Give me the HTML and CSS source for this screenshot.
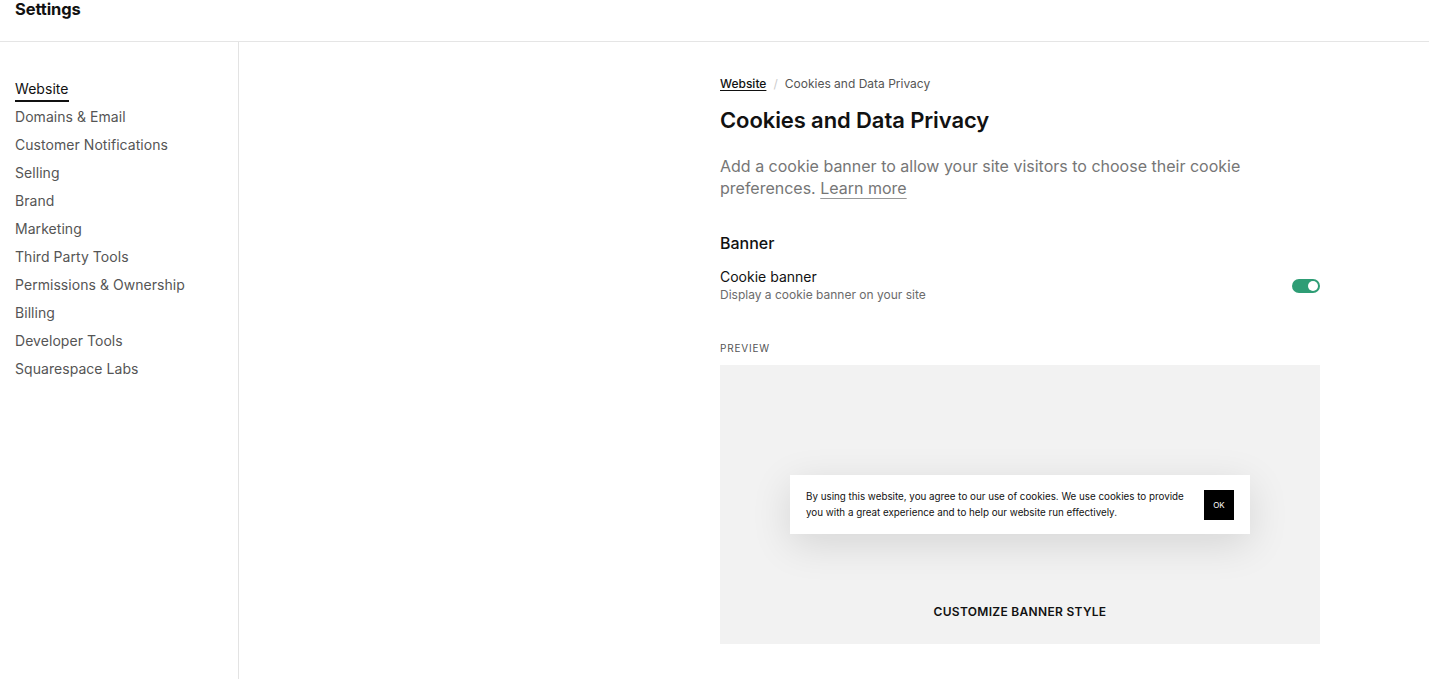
FILE: index.html
```html
<!DOCTYPE html>
<html>
<head>
<meta charset="utf-8">
<link rel="stylesheet" href="styles.css">
</head>
<body>
<header class="topbar"><h1 class="app-title">Settings</h1></header>
<div class="layout">
  <nav class="sidebar">
    <a class="nav-item active">Website</a>
    <a class="nav-item">Domains &amp; Email</a>
    <a class="nav-item">Customer Notifications</a>
    <a class="nav-item">Selling</a>
    <a class="nav-item">Brand</a>
    <a class="nav-item">Marketing</a>
    <a class="nav-item">Third Party Tools</a>
    <a class="nav-item">Permissions &amp; Ownership</a>
    <a class="nav-item">Billing</a>
    <a class="nav-item">Developer Tools</a>
    <a class="nav-item">Squarespace Labs</a>
  </nav>
  <main class="main">
    <section class="panel">
      <div class="breadcrumb"><a class="crumb-link">Website</a><span class="crumb-sep">/</span><span class="crumb-current">Cookies and Data Privacy</span></div>
      <h2 class="page-title">Cookies and Data Privacy</h2>
      <p class="intro">Add a cookie banner to allow your site visitors to choose their cookie preferences. <a class="learn">Learn more</a></p>
      <h3 class="section-title">Banner</h3>
      <div class="setting-row">
        <div class="setting-text">
          <div class="setting-label">Cookie banner</div>
          <div class="setting-desc">Display a cookie banner on your site</div>
        </div>
        <div class="toggle"><span class="knob"></span></div>
      </div>
      <div class="preview-label">PREVIEW</div>
      <div class="preview">
        <div class="cookie-banner">
          <p class="cookie-text">By using this website, you agree to our use of cookies. We use cookies to provide you with a great experience and to help our website run effectively.</p>
          <div class="ok-btn">OK</div>
        </div>
        <div class="customize">CUSTOMIZE BANNER STYLE</div>
      </div>
    </section>
  </main>
</div>
</body>
</html>
```
FILE: styles.css
```css
* { box-sizing: border-box; }
html, body { margin: 0; padding: 0; background: #fff; }
body { font-family: Inter, "Noto Sans", sans-serif; color: #111; width: 1429px; height: 679px; overflow: hidden; }
.topbar { height: 42px; border-bottom: 1px solid #e5e5e5; padding: 0 15px; }
.app-title { margin: 0; font-size: 16.5px; font-weight: 650; line-height: 18px; letter-spacing: -0.1px; }
.layout { display: flex; height: 637px; }
.sidebar { width: 239px; border-right: 1px solid #e3e3e3; padding: 38px 15px 0; display: flex; flex-direction: column; align-items: flex-start; }
.nav-item { font-size: 14px; line-height: 18px; color: #555; margin-bottom: 10px; letter-spacing: 0.05px; }
.nav-item.active { color: #111; padding-bottom: 2px; border-bottom: 2px solid #111; margin-bottom: 6px; }
.main { flex: 1; display: flex; justify-content: flex-end; padding-right: 109px; }
.panel { width: 600px; padding-top: 34px; }
.breadcrumb { font-size: 12px; line-height: 16px; display: flex; align-items: center; color: #555; }
.crumb-link { color: #111; text-decoration: underline; text-underline-offset: 2px; font-weight: 500; }
.crumb-sep { color: #ccc; margin: 0 7px; }
.page-title { margin: 14px 0 0; font-size: 22px; font-weight: 600; line-height: 28px; letter-spacing: -0.1px; }
.intro { margin: 21px 0 0; font-size: 16px; line-height: 22px; color: #767676; width: 540px; }
.learn { color: #767676; text-decoration: underline; text-decoration-color: #999; text-underline-offset: 4px; }
.section-title { margin: 34px 0 0; font-size: 16px; font-weight: 500; line-height: 20px; }
.setting-row { display: flex; align-items: center; justify-content: space-between; margin-top: 15px; }
.setting-label { font-size: 14px; line-height: 18px; color: #111; }
.setting-desc { font-size: 12px; line-height: 16px; color: #6b6b6b; margin-top: 1px; }
.toggle { width: 28px; height: 14px; border-radius: 7px; background: #2e9d75; position: relative; margin-top: 0; }
.knob { position: absolute; right: 2px; top: 2px; width: 10px; height: 10px; border-radius: 50%; background: #fff; }
.preview-label { margin-top: 38px; font-size: 10px; letter-spacing: 0.8px; color: #555; line-height: 14px; }
.preview { margin-top: 10px; height: 279px; background: #f2f2f2; display: flex; flex-direction: column; align-items: center; padding-top: 110px; }
.cookie-banner { width: 460px; height: 59px; background: #fff; display: flex; align-items: center; justify-content: space-between; padding: 0 16px; box-shadow: 0 10px 40px rgba(0,0,0,0.12); }
.cookie-text { margin: 0; font-size: 9.8px; line-height: 16px; color: #111; width: 392px; }
.ok-btn { width: 30px; height: 30px; background: #000; color: #fff; font-size: 8px; display: flex; align-items: center; justify-content: center; }
.customize { margin-top: 71px; font-size: 12px; font-weight: 600; letter-spacing: 0.3px; color: #111; line-height: 14px; }
```
